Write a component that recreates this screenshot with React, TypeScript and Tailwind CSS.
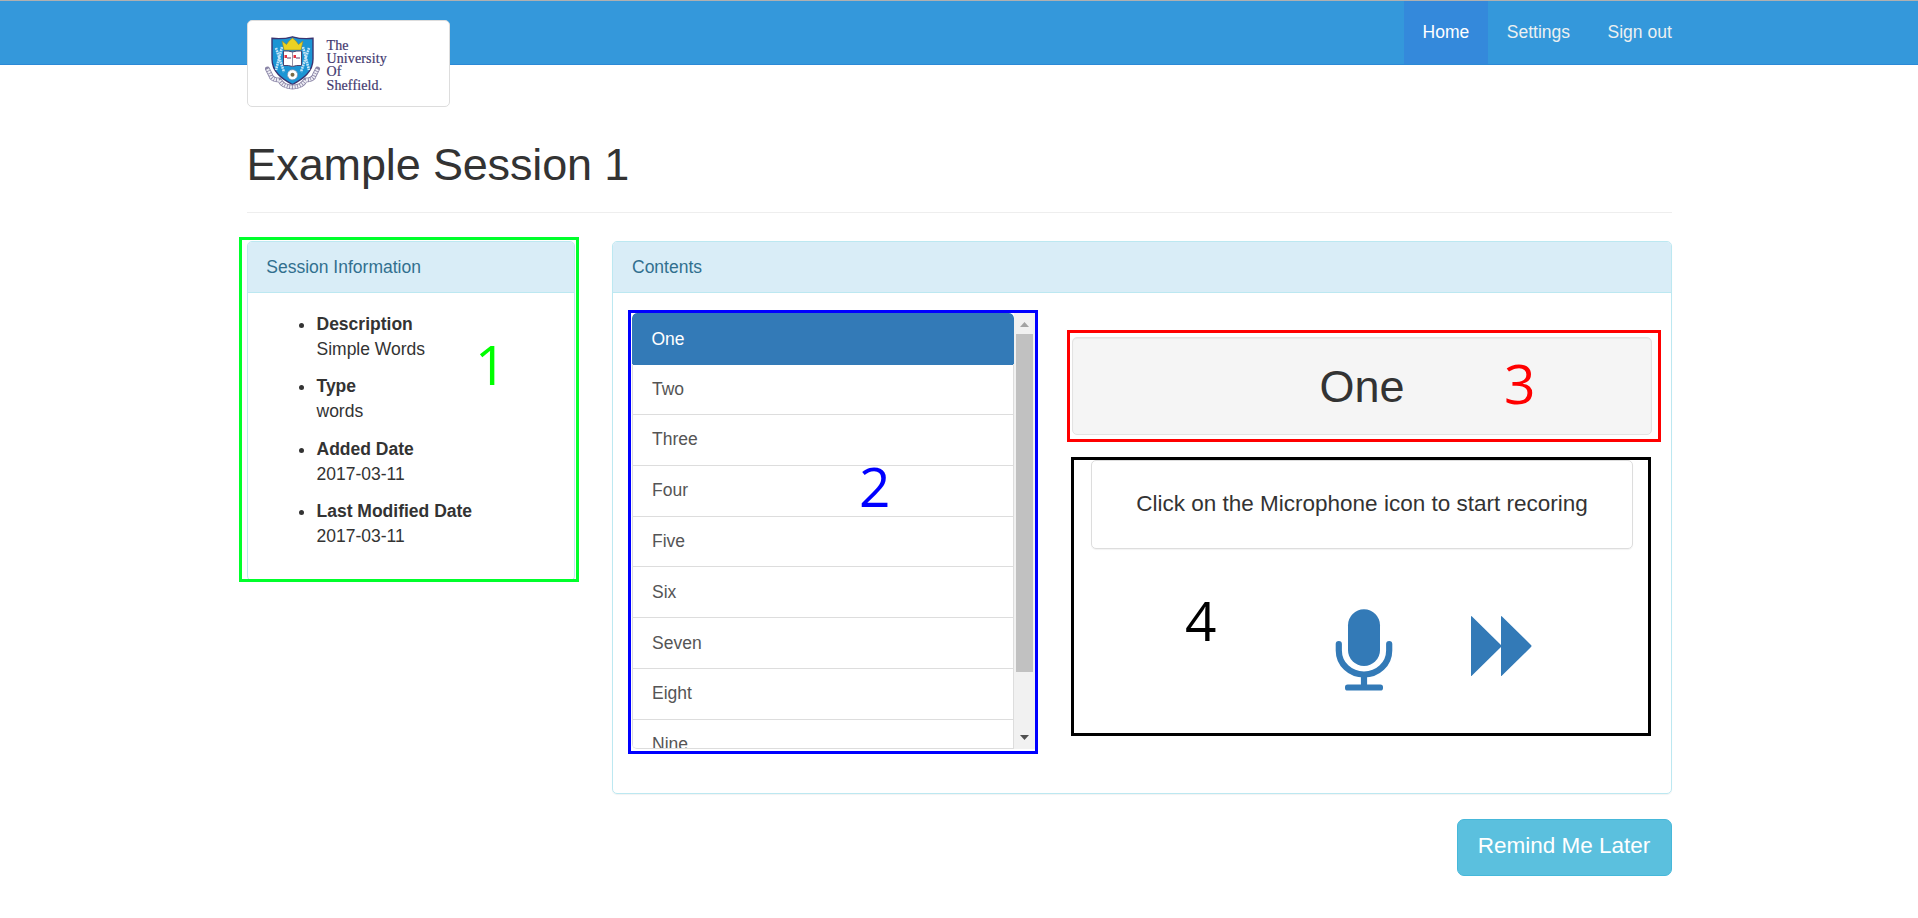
import React from "react";

const items = ["Two", "Three", "Four", "Five", "Six", "Seven", "Eight", "Nine"];

const info = [
  ["Description", "Simple Words"],
  ["Type", "words"],
  ["Added Date", "2017-03-11"],
  ["Last Modified Date", "2017-03-11"],
];

function Crest() {
  return (
    <svg width="56" height="56" viewBox="0 0 56 56" className="shrink-0">
      <path d="M7 2.300Q18 3.500 27.500 .8Q37 3.500 48 2.300V23C48 36 38 43 27.500 48.500C17 43 7 36 7 23Z" fill="#1b95d4" stroke="#3b3470" strokeWidth="1.400" />
      <g stroke="#c4e4f6" strokeWidth="2.600" strokeDasharray="1.800 .7">
        <path d="M11 12L19 36M17 11L11 34M44 12L36 36M38 11L44 34" />
      </g>
      <path d="M17 5l4.500 3.500l2.500-3.500l3.500-3l3.500 3l2.500 3.500l4.500-3.500l-2 9h-17Z" fill="#ecd222" stroke="#8d8a35" strokeWidth=".6" />
      <path d="M18.500 15q5-.5 9 1q4-1.500 9-1v14.500q-5-.5-9 1q-4-1.500-9-1Z" fill="#fff" stroke="#4c4570" strokeWidth="1" />
      <path d="M27.500 16v14.500" stroke="#77738b" strokeWidth=".8" />
      <path d="M19.500 20.500h2.500M28.500 20.500h2.500" stroke="#e6303f" strokeWidth="3" />
      <path d="M22 22h4M31 22h4" stroke="#9a7a98" strokeWidth="1.400" />
      <g fill="none">
        <path d="M2.500 33l3 6c1 4 4 5 9 5c2 4 6 7 13 7s11-3 13-7c5 0 8-1 9-5l3-6" stroke="#8a84a6" strokeWidth="5" strokeLinecap="round" strokeLinejoin="round" />
        <path d="M2.500 33l3 6c1 4 4 5 9 5c2 4 6 7 13 7s11-3 13-7c5 0 8-1 9-5l3-6" stroke="#efeff5" strokeWidth="3.200" strokeDasharray="1.800 .8" />
      </g>
      <circle cx="27.500" cy="38.800" r="5" fill="#fff" stroke="#8b94b0" strokeWidth="1" strokeDasharray="2 1" />
      <circle cx="27.500" cy="38.800" r="2" fill="#7a6a45" />
    </svg>
  );
}

function Microphone() {
  return (
    <svg width="58" height="82" viewBox="0 0 58 82" fill="#337ab7">
      <rect x="13" y=".3" width="32" height="56.700" rx="16" />
      <path d="M3.800 35V41.500C3.800 55 15 65.500 29 65.500S54.200 55 54.200 41.500V35" fill="none" stroke="#337ab7" strokeWidth="6.200" strokeLinecap="round" />
      <rect x="25.900" y="66" width="6.200" height="12" />
      <rect x="10" y="75.500" width="38" height="6" rx="2.600" />
    </svg>
  );
}

function Forward() {
  return (
    <svg width="61" height="60" viewBox="0 0 61 60" fill="#337ab7">
      <path d="M0 .5Q0-.5 1 .5L30 29V.5Q30-.5 31 .5L60 29Q61 30 60 31L31 59.500Q30 60.500 30 59.500V31L1 59.500Q0 60.500 0 59.500Z" />
    </svg>
  );
}

export default function App() {
  return (
    <div className="relative h-[918px] w-[1918px] overflow-hidden bg-white font-['Liberation_Sans',Arial,sans-serif] text-[17.5px] leading-[25px] text-[#333]">
      <header className="h-[65px] border-t border-b border-t-[#b0b0b0] border-b-[#2b89d6] bg-[#3498db]">
        <div className="mx-auto flex w-[1425px] items-start justify-between">
          <a className="mt-[19px] flex h-[87px] w-[203px] items-start rounded-[5px] border border-[#ddd] bg-white pt-[15px] pl-[17px]">
            <Crest />
            <span className="mt-[3px] ml-[6px] font-['Liberation_Serif',serif] text-[14px] leading-[13.2px] tracking-[0.12px] text-[#43396f] [-webkit-text-stroke:0.2px_#43396f]">
              The<br />University<br />Of<br />Sheffield.
            </span>
          </a>
          <nav className="-mr-[19px] flex h-[63px] text-[#ecf0f1]">
            <a className="bg-[#3489db] px-[18.75px] pt-[19px] text-white">Home</a>
            <a className="px-[18.75px] pt-[19px]">Settings</a>
            <a className="px-[18.75px] pt-[19px]">Sign out</a>
          </nav>
        </div>
      </header>

      <main className="mx-auto w-[1425px]">
        <h1 className="mt-[75px] h-[73px] border-b border-[#eee] text-[45px] leading-[50px] tracking-[-0.15px]">Example Session 1</h1>

        <div className="mt-[28px] flex items-start justify-between">
          <section className="h-[340px] w-[328px] rounded-[5px] border border-[#bce8f1] shadow-[0_1px_1px_rgba(0,0,0,0.05)]">
            <h2 className="h-[51px] rounded-t-[4px] border-b border-[#bce8f1] bg-[#d9edf7] pt-[12.5px] pl-[18.75px] text-[#31708f]">Session Information</h2>
            <ul className="pt-[18.5px] pl-[69px]">
              {info.map(([label, value]) => (
                <li key={label} className="relative mb-[12.5px]">
                  <span className="absolute top-[11px] -left-[18px] size-[5px] rounded-full bg-[#333]" />
                  <b className="block">{label}</b>
                  {value}
                </li>
              ))}
            </ul>
          </section>

          <section className="h-[553px] w-[1060px] rounded-[5px] border border-[#bce8f1] shadow-[0_1px_1px_rgba(0,0,0,0.05)]">
            <h2 className="h-[51px] rounded-t-[4px] border-b border-[#bce8f1] bg-[#d9edf7] pt-[12.5px] pl-[19.5px] text-[#31708f]">Contents</h2>
            <div className="flex">
              <div className="mt-[17px] ml-[15px] flex h-[444px] w-[410px] border-3 border-[#0000ff] pl-px">
                <div className="h-[436px] w-[382px] overflow-hidden rounded-[5px] rounded-br-none border-b border-[#ddd] text-[#555]">
                  <div className="h-[51.2px]">
                    <div className="h-[52px] rounded-t-[5px] bg-[#337ab7] pt-[13.5px] pl-[20px] text-white">One</div>
                  </div>
                  {items.map((item) => (
                    <div key={item} className="h-[50.8px] border-x border-b border-[#ddd] pt-[12.5px] pl-[19.5px]">{item}</div>
                  ))}
                </div>
                <div className="flex h-[436px] w-[21px] flex-col items-center bg-[#f1f1f1]">
                  <svg width="9" height="5" className="mt-[9px]"><path d="M4.500 0L9 5H0Z" fill="#a3a3a3" /></svg>
                  <div className="mt-[7px] h-[338px] w-[17px] bg-[#c1c1c1]" />
                  <svg width="9" height="5" className="mt-[63px]"><path d="M0 0H9L4.500 5Z" fill="#505050" /></svg>
                </div>
              </div>

              <div className="mt-[37px] ml-[29px]">
                <div className="flex h-[112px] w-[594px] items-start border-3 border-[#ff0000] pt-[4px] pl-[2px]">
                  <div className="h-[98px] w-[580px] rounded-[5px] border border-[#e3e3e3] bg-[#f5f5f5] pt-[24px] pl-px text-center text-[45px] leading-[50px] shadow-[inset_0_1px_1px_rgba(0,0,0,0.05)]">One</div>
                </div>
                <div className="mt-[15px] ml-[4px] h-[279px] w-[580px] border-3 border-black pl-[17px]">
                  <div className="h-[89px] w-[542px] rounded-[5px] border border-[#ddd] pt-[29.5px] pl-px text-center text-[22.5px] leading-[25px] shadow-[0_1px_1px_rgba(0,0,0,0.05)]">
                    Click on the Microphone icon to start recoring
                  </div>
                  <div className="mt-[60px] flex pl-[244px]">
                    <Microphone />
                    <span className="mt-[7px] ml-[78px]"><Forward /></span>
                  </div>
                </div>
              </div>
            </div>
          </section>
        </div>

        <div className="mt-[25px] flex justify-end">
          <button className="h-[57px] w-[215px] rounded-[7px] border border-[#46b8da] bg-[#5bc0de] pb-[4px] text-[22.5px] text-white">Remind Me Later</button>
        </div>
      </main>

      <div className="absolute top-[237px] left-[239px] h-[345px] w-[340px] border-3 border-[#00ff2b]" />
      <div className="absolute top-[326px] left-[475px] font-['Open_Sans',sans-serif] text-[55px] leading-[76px] font-medium text-[#00ff00]">1</div>
      <div className="absolute top-[448px] left-[859px] font-['Open_Sans',sans-serif] text-[55px] leading-[76px] font-medium text-[#0000ff]">2</div>
      <div className="absolute top-[345px] left-[1504px] font-['Open_Sans',sans-serif] text-[55px] leading-[76px] font-medium text-[#ff0000]">3</div>
      <div className="absolute top-[582px] left-[1185px] font-['Open_Sans',sans-serif] text-[55px] leading-[76px] font-medium text-black">4</div>
    </div>
  );
}
